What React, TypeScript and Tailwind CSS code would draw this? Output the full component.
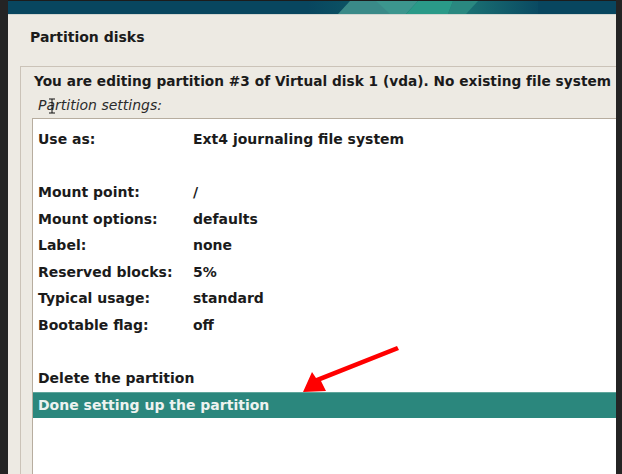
import React from "react";

const rows: { label: string; value: string }[] = [
  { label: "Use as:", value: "Ext4 journaling file system" },
  { label: "", value: "" },
  { label: "Mount point:", value: "/" },
  { label: "Mount options:", value: "defaults" },
  { label: "Label:", value: "none" },
  { label: "Reserved blocks:", value: "5%" },
  { label: "Typical usage:", value: "standard" },
  { label: "Bootable flag:", value: "off" },
  { label: "", value: "" },
];

export default function App() {
  return (
    <div
      className="relative w-[622px] h-[474px] bg-[#242424] flex overflow-hidden text-[#1b1b1b]"
      style={{ fontFamily: '"DejaVu Sans", "Liberation Sans", sans-serif' }}
    >
      <div className="w-[8px] shrink-0" />
      <div className="flex-1 flex flex-col min-w-0">
        <div className="h-[1px] bg-[#1c1c1c]" />
        <div className="h-[13px] bg-[#08465f] relative overflow-hidden">
          <svg className="absolute inset-0" width="608" height="13" viewBox="0 0 608 13">
            <defs>
              <linearGradient id="g1" x1="0" x2="1" y1="0" y2="0">
                <stop offset="0" stopColor="#08465f" />
                <stop offset="0.35" stopColor="#0f5c68" />
                <stop offset="0.6" stopColor="#1f7c78" />
                <stop offset="1" stopColor="#0a4a62" />
              </linearGradient>
            </defs>
            <rect x="300" y="0" width="230" height="13" fill="url(#g1)" />
            <polygon points="330,13 342,0 375,0 385,13" fill="#3a8a88" />
            <polygon points="368,0 410,0 398,13 382,13" fill="#3c968e" />
            <polygon points="410,0 445,0 440,13 398,13" fill="#2a9a88" />
            <polygon points="445,0 470,0 458,13 440,13" fill="#2a8880" />
          </svg>
        </div>
        <div className="h-[1px] bg-[#d3d6d1]" />
        <div className="flex-1 bg-[#edeae3] flex flex-col min-h-0">
          <div className="h-[44px] flex items-center pl-[22px] pt-[1px] text-[14px] font-bold">
            Partition disks
          </div>
          <div className="ml-[12px] mt-[7px] flex-1 border-l border-t border-[#cbc3b8] flex flex-col min-h-0">
            <div className="h-[27px] flex items-center pl-[13px] pt-[1px] text-[13.7px] tracking-[0.03px] font-bold whitespace-nowrap">
              You are editing partition #3 of Virtual disk 1 (vda). No existing file system
            </div>
            <div className="h-[23px] flex items-center pl-[17px] text-[14px] italic text-[#2b2b2b]">
              Partition settings:
            </div>
            <div className="ml-[11px] mt-[1px] flex-1 bg-white border-l border-t border-[#b7ad9f] pt-[7.5px] text-[14px] font-bold">
              {rows.map((r, i) => (
                <div key={i} className="h-[26.5px] flex items-center pl-[5px]">
                  <span className="w-[155px]">{r.label}</span>
                  <span>{r.value}</span>
                </div>
              ))}
              <div className="h-[26.5px] flex items-center pl-[5px]">Delete the partition</div>
              <div className="h-[26.5px] flex items-center pl-[3px] bg-[#2b877d] border-t border-[#5fa69c] text-[#edf3f0]">
                <span className="pl-[2px]">Done setting up the partition</span>
              </div>
            </div>
          </div>
        </div>
      </div>
      <div className="w-[6px] shrink-0" />

      <svg className="absolute left-0 top-0 pointer-events-none" width="622" height="474" viewBox="0 0 622 474">
        <polygon points="397,346 399,350 321,381 326,391 303,392 312,372 316,378" fill="#ff0000" />
        <g stroke="#111" strokeWidth="1" fill="none">
          <line x1="52" y1="99" x2="52" y2="113" />
          <line x1="49" y1="99" x2="55" y2="99" />
          <line x1="49" y1="113" x2="55" y2="113" />
        </g>
      </svg>
    </div>
  );
}
